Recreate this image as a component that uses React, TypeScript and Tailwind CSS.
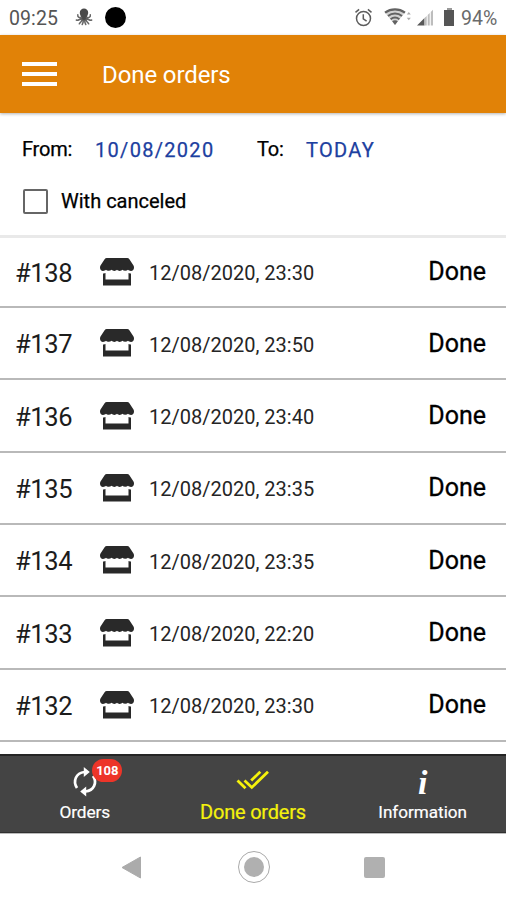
import React from "react";

const orders = [
  { id: 138, date: "12/08/2020, 23:30" },
  { id: 137, date: "12/08/2020, 23:50" },
  { id: 136, date: "12/08/2020, 23:40" },
  { id: 135, date: "12/08/2020, 23:35" },
  { id: 134, date: "12/08/2020, 23:35" },
  { id: 133, date: "12/08/2020, 22:20" },
  { id: 132, date: "12/08/2020, 23:30" },
];

function OctopusIcon() {
  return (
    <svg className="h-[18px] w-[18px]" viewBox="0 0 18 18" fill="none" stroke="#666" strokeWidth="1.500" strokeLinecap="round">
      <path d="M4.800 4.800a4.200 4.200 0 0 1 8.400 0c0 1.700-1.200 2.800-1 4.200l1.300 2.600-4.500 2-4.500-2 1.300-2.600c0-1.400-1-2.500-1-4.200z" fill="#4a4a4a" stroke="none" />
      <path d="M6.500 9.500C4 10 2.500 9.200 2.800 6.800M11.500 9.500c2.500.5 4.200-.3 3.800-2.700M6.500 11C4 11 3.500 13 1.300 12M11.500 11c2.500 0 3 2 5.200 1M7 12c-.5 2-1.500 2-2.700 3.800M11 12c.5 2 1.500 2 2.700 3.800M8.200 12.500c.3 2-.5 2.700-1 4M9.800 12.500c-.3 2 .5 2.700 1 4" />
    </svg>
  );
}

function AlarmIcon() {
  return (
    <svg className="h-[19px] w-[19px]" viewBox="0 0 19 19" fill="none" stroke="#5c5c5c" strokeWidth="1.500">
      <circle cx="9.500" cy="10.500" r="7" />
      <path d="M9.300 6.200v4.600l3.300 2.300M1.500 4.300l3.600-3M17.500 4.300l-3.600-3" />
    </svg>
  );
}

function WifiIcon() {
  return (
    <svg className="h-[18px] w-[28px]" viewBox="0 0 28 18" fill="none" stroke="#626262">
      <path d="M1 4.600C7 .2 15 .2 21 4.600L11 17z" fill="#d2d2d2" stroke="none" />
      <path d="M1 4.600C7 .4 15 .4 21 4.600" strokeWidth="2.300" />
      <path d="M4 8c4-3.200 10-3.200 14 0M6.600 11.200c2.600-2 6.200-2 8.800 0" strokeWidth="2" />
      <path d="M8.200 13.200c1.600-1.200 4-1.200 5.600 0L11 17z" fill="#626262" stroke="none" />
      <path d="M22.800 6.500l2-2.600 2 2.600zM22.800 9.700l2 2.600 2-2.600z" fill="#aaa" stroke="none" />
    </svg>
  );
}

function SignalIcon() {
  return (
    <svg className="h-[17px] w-[17px]" viewBox="0 0 17 17">
      <path d="M0 16.500L7.500 9v7.500z" fill="#585858" />
      <path d="M7.500 9L9.700 7v9.500H7.500zM10.700 6l2-2v12.500h-2zM13.800 3L16 .8v15.700h-2.200z" fill="#bdbdbd" />
    </svg>
  );
}

function StoreIcon() {
  return (
    <svg className="h-[28px] w-[34px] shrink-0" viewBox="0 0 34 28" fill="#292929">
      <path d="M6.800 0h20.400q1.400 0 2.200 1.200l4.100 6.300q.5.900.5 2c0 2.200-1.300 3.500-3 3.500-1.300 0-2.300-.5-3-1.200-.7.600-1.600 1-2.800 1s-2.100-.4-2.800-1c-.7.700-1.600 1.200-2.700 1.200s-2-.5-2.700-1.200c-.7.700-1.600 1.200-2.700 1.200s-2-.5-2.800-1.200c-.7.600-1.600 1-2.800 1s-2-.4-2.700-1c-.7.700-1.700 1.200-3 1.200-1.700 0-3-1.300-3-3.500q0-1.100.5-2l4.100-6.300Q5.400 0 6.800 0z" />
      <path d="M3 15.500q1.500.2 2.500-.4v6.400h23v-6.400q1 .6 2.500.4V27.500H3z" />
    </svg>
  );
}

function RefreshIcon() {
  return (
    <svg className="h-[31px] w-[26px]" viewBox="0 0 26 31" fill="none" stroke="white" strokeWidth="2.700">
      <path d="M5 22C.5 15 4 7 12.500 6M21 10C25.500 16.500 22 24.500 13.500 25.500" />
      <path d="M11.800 1l6 5-6 5zM14.200 20.500l-6 5 6 5z" fill="white" stroke="none" />
    </svg>
  );
}

function DoubleCheckIcon() {
  return (
    <svg className="h-[20px] w-[34px]" viewBox="0 0 34 20" fill="none" stroke="#f5f20c" strokeWidth="2.800">
      <path d="M1.500 10.500l8 7.700M8.500 10.500l7.300 6.900L32 1.700M15.200 10.600L24.300 1.700" />
    </svg>
  );
}

export default function App() {
  return (
    <div className="flex h-[900px] w-[506px] flex-col overflow-hidden bg-white font-['Roboto','Noto_Sans',sans-serif] text-black">
      <div className="flex h-[34.500px] shrink-0 items-center pr-[8px] pl-[9px] text-[#555]">
        <span className="w-[66px] pt-[3px] text-[19.500px] leading-[24px] tracking-[0.1px]">09:25</span>
        <OctopusIcon />
        <div className="ml-[12px] h-[21px] w-[21px] rounded-full bg-black" />
        <div className="ml-auto flex items-center">
          <AlarmIcon />
          <div className="ml-[11px]"><WifiIcon /></div>
          <div className="ml-[5px]"><SignalIcon /></div>
          <div className="ml-[10px] flex flex-col items-center">
            <div className="h-[2px] w-[5px] bg-[#999]" />
            <div className="h-[16px] w-[10px] bg-[#555]" />
          </div>
          <span className="ml-[7px] w-[37px] pt-[3px] text-[19.500px] leading-[24px] whitespace-nowrap text-[#6a6a6a]">94%</span>
        </div>
      </div>

      <header className="flex h-[78px] shrink-0 items-center bg-[#e18207] pl-[22px] text-white shadow-[0_1px_3px_rgba(0,0,0,0.3)]">
        <div className="flex h-[24px] w-[35px] flex-col justify-between">
          <div className="h-[4px] bg-white" />
          <div className="h-[4px] bg-white" />
          <div className="h-[4px] bg-white" />
        </div>
        <h1 className="ml-[45px] pt-[2px] text-[24px] leading-[30px] tracking-[-0.100px]">Done orders</h1>
      </header>

      <section className="h-[125px] shrink-0 border-b-[3px] border-[#e9e9e9] px-[22px] pt-[24px]">
        <div className="flex h-[24px] items-center text-[20px] leading-[24px]">
          <span className="w-[73px] tracking-[-0.200px] [-webkit-text-stroke:0.250px_black]">From:</span>
          <span className="w-[162px] pt-[2px] tracking-[1.300px] text-[#1c40a0] [-webkit-text-stroke:0.250px_#1c40a0]">10/08/2020</span>
          <span className="w-[49px] tracking-[-0.200px] [-webkit-text-stroke:0.250px_black]">To:</span>
          <span className="pt-[2px] tracking-[1.300px] text-[#1c40a0] [-webkit-text-stroke:0.250px_#1c40a0]">TODAY</span>
        </div>
        <div className="mt-[27px] flex h-[26px] items-center">
          <div className="mt-[2px] ml-px h-[25px] w-[25px] rounded-[2px] border-2 border-[#666]" />
          <span className="ml-[13px] text-[20px] leading-[24px] [-webkit-text-stroke:0.250px_black]">With canceled</span>
        </div>
      </section>

      <main className="h-[516.500px] shrink-0 overflow-hidden">
        {orders.map((order, i) => (
          <div
            key={order.id}
            className={
              "flex items-center border-b-2 border-[#b9b9b9] pr-[20px] pl-[15px] " +
              (i === 0 ? "h-[70.500px]" : "h-[72.350px]")
            }
          >
            <span className="w-[85px] pt-[2px] text-[25.500px] leading-[30px] tracking-[-0.400px] text-[#1c1c1c]">#{order.id}</span>
            <StoreIcon />
            <span className="ml-[15px] pt-[3px] text-[20px] leading-[24px] text-[#252525]">{order.date}</span>
            <span className="ml-auto pt-px text-[25px] leading-[30px] [-webkit-text-stroke:0.300px_black]">Done</span>
          </div>
        ))}
      </main>

      <nav className="grid h-[79px] shrink-0 grid-cols-3 border-t-2 border-b border-t-[#242424] border-b-[#303030] bg-[#444] text-white">
        <div className="flex flex-col items-center pt-[10px] pl-px">
          <div className="relative h-[31px]">
            <RefreshIcon />
            <span className="absolute -top-[7px] left-[20.500px] flex h-[23px] w-[30px] items-center justify-center rounded-full bg-[#ed3529] text-[13px] font-bold">108</span>
          </div>
          <span className="mt-[3px] text-[17.300px] leading-[24px] tracking-[-0.100px] [-webkit-text-stroke:0.200px_white]">Orders</span>
        </div>
        <div className="flex flex-col items-center pt-[14px] text-[#f5f20c]">
          <DoubleCheckIcon />
          <span className="mt-[8px] text-[20px] leading-[28px] tracking-[-0.200px] [-webkit-text-stroke:0.200px_#f5f20c]">Done orders</span>
        </div>
        <div className="flex flex-col items-center pt-[10px] pl-[2px]">
          <span className="h-[31px] font-['Liberation_Serif',serif] text-[34px] leading-[34px] font-bold italic">i</span>
          <span className="mt-[3px] text-[17.100px] leading-[24px] [-webkit-text-stroke:0.200px_white]">Information</span>
        </div>
      </nav>

      <div className="flex h-[67px] shrink-0 items-center border-t border-[#bbb] pl-[121px]">
        <svg className="h-[23px] w-[21px]" viewBox="0 0 21 23"><path d="M1 11.500L19.500 1v21z" fill="#ababab" stroke="#ababab" strokeLinejoin="round" /></svg>
        <div className="ml-[96px] flex h-[32px] w-[32px] items-center justify-center rounded-full border-[1.500px] border-[#aaa]">
          <div className="h-[20px] w-[20px] rounded-full bg-[#b0b0b0]" />
        </div>
        <div className="ml-[94px] h-[21px] w-[21px] rounded-[2px] bg-[#b0b0b0]" />
      </div>
    </div>
  );
}
